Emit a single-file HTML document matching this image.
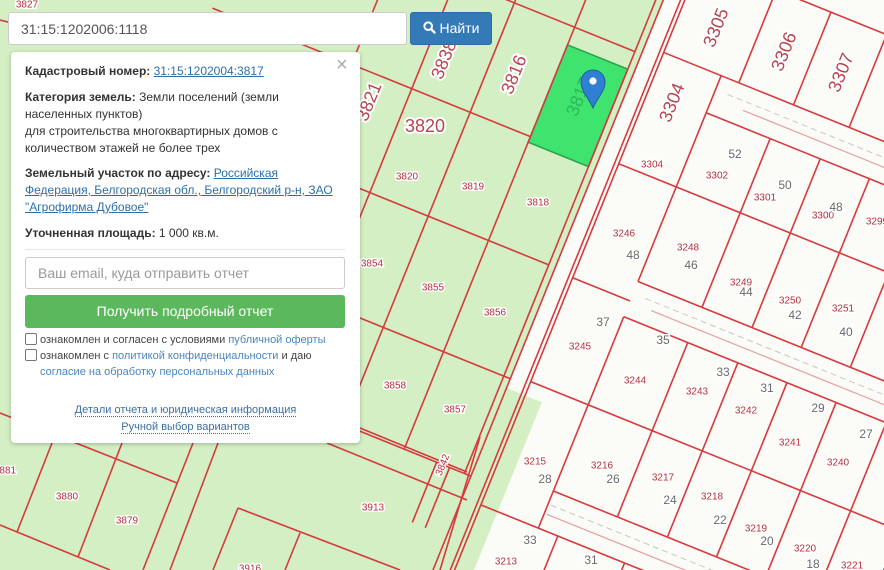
<!DOCTYPE html>
<html><head><meta charset="utf-8">
<style>
*{margin:0;padding:0;box-sizing:border-box}
html,body{width:884px;height:570px;overflow:hidden}
body{position:relative;font-family:"Liberation Sans",Arial,sans-serif;background:#d3efc3}
svg.map{position:absolute;left:0;top:0}
.sl{font:10px "Liberation Sans",sans-serif;fill:#b3303c;stroke:#fff;stroke-width:3px;paint-order:stroke;text-anchor:middle;dominant-baseline:middle}
.gn{font:12px "Liberation Sans",sans-serif;fill:#6a6a6a;stroke:#fff;stroke-width:3px;paint-order:stroke;text-anchor:middle;dominant-baseline:middle}
.bl{font:18px "Liberation Sans",sans-serif;fill:#b84450;stroke:#fff;stroke-width:4px;paint-order:stroke;text-anchor:middle;dominant-baseline:middle}
#search{position:absolute;left:8px;top:12px;width:399px;height:33px;background:#fff;border:1px solid #ccc;border-radius:3px;font-size:14px;color:#555;padding:8px 12px;line-height:16px}
#btn{position:absolute;left:410px;top:12px;width:82px;height:33px;background:#337ab7;border-radius:3px;color:#fff;font-size:14px;line-height:31px;text-align:center;border:1px solid #2e6da4}
#panel{position:absolute;left:11px;top:52px;width:349px;height:391px;background:#fff;border-radius:4px;box-shadow:0 1px 4px rgba(0,0,0,.25);font-size:12px;color:#333;overflow:hidden}
#panel p{line-height:17px}
#panel b{font-weight:bold}
#panel a{color:#2a6fad;text-decoration:underline}
.cl{position:absolute;left:325px;top:3px;font-size:20px;color:#aaa;line-height:20px}
.sep{position:absolute;left:14px;top:197px;width:320px;border-top:1px solid #e5e5e5}
.email{position:absolute;left:14px;top:205px;width:320px;height:32px;border:1px solid #ccc;border-radius:3px;font-size:14px;color:#999;padding:7px 12px;line-height:16px}
.gb{position:absolute;left:14px;top:243px;width:320px;height:33px;border-radius:3px;background:#5cb85c;color:#fff;font-size:14px;text-align:center;line-height:33px}
.cb{position:absolute;left:14px;font-size:11px;color:#444;line-height:16px;white-space:nowrap}
.cb i{display:inline-block;width:12px;height:12px;border:1px solid #777;border-radius:2px;vertical-align:-2px;margin-right:3px}
.cb span{color:#4a85c0}
.lk{position:absolute;left:0;width:349px;text-align:center;font-size:11px;line-height:14px}
.lk span{color:#3b6fa5;border-bottom:1px dotted #3b6fa5}
</style></head><body>
<svg class="map" width="884" height="570" viewBox="0 0 884 570">
<g transform="rotate(22)" stroke="#d63a3e" stroke-width="1.6" fill="none">
 <rect x="-600" y="-500" width="1215" height="1400" fill="#d3efc3" stroke="none"/>
 <rect x="615" y="-500" width="700" height="1400" fill="#fbfbf7" stroke="none"/>
 <rect x="615" y="170" width="38" height="700" fill="#d3efc3" stroke="none"/>
 <rect x="543" y="-171" width="65" height="105" fill="#3ee46e" stroke="#2aa64a"/>
 <line x1="615" y1="-500" x2="615" y2="900"/>
 <line x1="631" y1="-500" x2="631" y2="900"/><line x1="635" y1="-500" x2="635" y2="900"/>
 <line x1="716" y1="-300" x2="1200" y2="-300"/>
 <line x1="635" y1="-200" x2="1200" y2="-200"/>
 <line x1="697" y1="-160" x2="1200" y2="-160"/>
 <line x1="635" y1="-80" x2="1200" y2="-80"/>
 <line x1="697" y1="22" x2="1200" y2="22"/>
 <line x1="635" y1="43" x2="697" y2="43"/>
 <line x1="697" y1="60" x2="1200" y2="60"/>
 <line x1="635" y1="155" x2="1200" y2="155"/>
 <line x1="697" y1="248" x2="1200" y2="248"/>
 <line x1="635" y1="288" x2="1200" y2="288"/>
 <line x1="697" y1="-200" x2="697" y2="22"/>
 <line x1="697" y1="60" x2="697" y2="288"/>
 <line x1="716" y1="-300" x2="716" y2="-200"/><line x1="775" y1="-300" x2="775" y2="-200"/>
 <line x1="835" y1="-300" x2="835" y2="-200"/><line x1="895" y1="-300" x2="895" y2="-200"/>
 <line x1="766" y1="-160" x2="766" y2="22"/><line x1="820" y1="-160" x2="820" y2="22"/>
 <line x1="873" y1="-160" x2="873" y2="22"/><line x1="926" y1="-160" x2="926" y2="22"/>
 <line x1="980" y1="-160" x2="980" y2="22"/><line x1="1033" y1="-160" x2="1033" y2="22"/>
 <line x1="766" y1="60" x2="766" y2="248"/><line x1="820" y1="60" x2="820" y2="248"/>
 <line x1="873" y1="60" x2="873" y2="248"/><line x1="926" y1="60" x2="926" y2="248"/>
 <line x1="980" y1="60" x2="980" y2="248"/><line x1="1033" y1="60" x2="1033" y2="248"/>
 <line x1="718" y1="288" x2="718" y2="600"/><line x1="790" y1="288" x2="790" y2="600"/>
 <line x1="860" y1="288" x2="860" y2="600"/><line x1="930" y1="288" x2="930" y2="600"/>
 <g stroke="#c8c8c8" stroke-width="1" stroke-dasharray="6 4">
  <line x1="710" y1="-185" x2="1200" y2="-185"/><line x1="710" y1="35" x2="1200" y2="35"/><line x1="700" y1="262" x2="1200" y2="262"/>
 </g>
 <g stroke="#e7a0a0" stroke-width="1.2">
  <line x1="730" y1="-176" x2="1200" y2="-176"/><line x1="720" y1="44" x2="1200" y2="44"/><line x1="700" y1="272" x2="1200" y2="272"/>
 </g>
 <line x1="300" y1="-300" x2="608" y2="-300"/>
 <line x1="380" y1="-190" x2="608" y2="-190"/>
 <line x1="200" y1="-72" x2="543" y2="-72"/>
 <line x1="100" y1="40" x2="608" y2="40"/>
 <line x1="100" y1="160" x2="615" y2="160"/>
 <line x1="300" y1="265" x2="615" y2="265"/>
 <line x1="608" y1="-500" x2="608" y2="265"/>
 <line x1="543" y1="-400" x2="543" y2="40"/>
 <line x1="478" y1="-300" x2="478" y2="265"/>
 <line x1="415" y1="-190" x2="415" y2="265"/>
 <line x1="543" y1="40" x2="543" y2="265"/>
 <line x1="350" y1="-300" x2="350" y2="40"/>
 <line x1="578" y1="265" x2="578" y2="330"/><line x1="592" y1="265" x2="592" y2="330"/>
</g>
<g stroke="#d63a3e" stroke-width="1.6" fill="none">
 <line x1="0" y1="413" x2="177" y2="483"/>
 <line x1="0" y1="525" x2="110" y2="570"/>
 <line x1="52" y1="443" x2="17" y2="532"/>
 <line x1="122" y1="443" x2="78" y2="557"/>
 <line x1="193" y1="443" x2="143" y2="570"/>
 <line x1="218" y1="443" x2="170" y2="570"/>
 <line x1="327" y1="443" x2="467" y2="500"/>
 <line x1="360" y1="428" x2="467" y2="472"/>
 <line x1="238" y1="508" x2="400" y2="570"/>
 <line x1="238" y1="508" x2="213" y2="570"/>
 <line x1="300" y1="533" x2="285" y2="570"/>
 <line x1="480" y1="437" x2="440" y2="570"/>
 <line x1="0" y1="20" x2="40" y2="30"/>
</g>
<text class="bl" x="425" y="127">3820</text>
<text class="bl" transform="translate(515,75) rotate(-68)">3816</text>
<text class="bl" transform="translate(445,60) rotate(-68)">3838</text>
<text class="bl" transform="translate(370,102) rotate(-68)">3821</text>
<text class="bl" transform="translate(673,103) rotate(-68)">3304</text>
<text class="bl" transform="translate(717,28) rotate(-68)">3305</text>
<text class="bl" transform="translate(785,52) rotate(-68)">3306</text>
<text class="bl" transform="translate(842,73) rotate(-68)">3307</text>
<text class="bl" transform="translate(580,97) rotate(-68)" style="fill:#2fb85a;stroke:none">3817</text>
<g>
<text class="sl" x="27" y="5">3827</text>
<text class="sl" x="407" y="177">3820</text><text class="sl" x="473" y="187">3819</text><text class="sl" x="538" y="203">3818</text>
<text class="sl" x="372" y="264">3854</text><text class="sl" x="433" y="288">3855</text><text class="sl" x="495" y="313">3856</text>
<text class="sl" x="395" y="386">3858</text><text class="sl" x="455" y="410">3857</text><text class="sl" x="373" y="508">3913</text>
<text class="sl" x="67" y="497">3880</text><text class="sl" x="127" y="521">3879</text><text class="sl" x="5" y="471">3881</text>
<text class="sl" x="250" y="569">3916</text>
<text class="sl" transform="translate(443,465) rotate(-68)">3842</text>
<text class="sl" x="652" y="165">3304</text><text class="sl" x="717" y="176">3302</text><text class="sl" x="765" y="198">3301</text>
<text class="sl" x="823" y="216">3300</text><text class="sl" x="877" y="222">3299</text>
<text class="sl" x="624" y="234">3246</text><text class="sl" x="688" y="248">3248</text><text class="sl" x="741" y="283">3249</text>
<text class="sl" x="790" y="301">3250</text><text class="sl" x="843" y="309">3251</text>
<text class="sl" x="580" y="347">3245</text><text class="sl" x="635" y="381">3244</text><text class="sl" x="697" y="392">3243</text>
<text class="sl" x="746" y="411">3242</text><text class="sl" x="790" y="443">3241</text><text class="sl" x="838" y="463">3240</text>
<text class="sl" x="535" y="462">3215</text><text class="sl" x="602" y="466">3216</text><text class="sl" x="663" y="478">3217</text>
<text class="sl" x="712" y="497">3218</text><text class="sl" x="756" y="529">3219</text><text class="sl" x="805" y="549">3220</text>
<text class="sl" x="852" y="566">3221</text><text class="sl" x="506" y="562">3213</text>
</g>
<g>
<text class="gn" x="735" y="155">52</text><text class="gn" x="785" y="186">50</text><text class="gn" x="836" y="208">48</text>
<text class="gn" x="633" y="256">48</text><text class="gn" x="691" y="266">46</text><text class="gn" x="746" y="293">44</text>
<text class="gn" x="795" y="316">42</text><text class="gn" x="846" y="333">40</text>
<text class="gn" x="603" y="323">37</text><text class="gn" x="663" y="341">35</text><text class="gn" x="723" y="373">33</text>
<text class="gn" x="767" y="389">31</text><text class="gn" x="818" y="409">29</text><text class="gn" x="866" y="435">27</text>
<text class="gn" x="545" y="480">28</text><text class="gn" x="613" y="480">26</text><text class="gn" x="670" y="501">24</text>
<text class="gn" x="720" y="521">22</text><text class="gn" x="767" y="542">20</text><text class="gn" x="813" y="565">18</text>
<text class="gn" x="530" y="541">33</text><text class="gn" x="591" y="561">31</text>
</g>
<path d="M593 108 C588 97 581 91 581 82 A12 12 0 0 1 605 82 C605 91 598 97 593 108 Z" fill="#2f7fd2" stroke="#1f5ea3" stroke-width="1"/>
<circle cx="593" cy="81" r="3.6" fill="#fff"/>
</svg>

<div id="search">31:15:1202006:1118</div>
<div id="btn"><svg width="13" height="13" viewBox="0 0 13 13" style="vertical-align:-1px"><circle cx="5.2" cy="5.2" r="3.8" fill="none" stroke="#fff" stroke-width="2"/><line x1="8" y1="8" x2="11.5" y2="11.5" stroke="#fff" stroke-width="2.4" stroke-linecap="round"/></svg> Найти</div>

<div id="panel">
 <div class="cl">×</div>
 <p style="position:absolute;left:14px;top:11px"><b>Кадастровый номер:</b> <a>31:15:1202004:3817</a></p>
 <p style="position:absolute;left:14px;top:37px;width:300px"><b>Категория земель:</b> Земли поселений (земли населенных пунктов)<br>для строительства многоквартирных домов с количеством этажей не более трех</p>
 <p style="position:absolute;left:14px;top:113px;width:320px"><b>Земельный участок по адресу:</b> <a>Российская Федерация, Белгородская обл., Белгородский р-н, ЗАО "Агрофирма Дубовое"</a></p>
 <p style="position:absolute;left:14px;top:173px"><b>Уточненная площадь:</b> 1 000 кв.м.</p>
 <div class="sep"></div>
 <div class="email">Ваш email, куда отправить отчет</div>
 <div class="gb">Получить подробный отчет</div>
 <div class="cb" style="top:280px"><i></i>ознакомлен и согласен с условиями <span>публичной оферты</span></div>
 <div class="cb" style="top:296px"><i></i>ознакомлен с <span>политикой конфиденциальности</span> и даю</div>
 <div class="cb" style="top:312px;left:29px"><span>согласие на обработку персональных данных</span></div>
 <div class="lk" style="top:351px"><span>Детали отчета и юридическая информация</span></div>
 <div class="lk" style="top:368px"><span>Ручной выбор вариантов</span></div>
</div>
</body></html>
